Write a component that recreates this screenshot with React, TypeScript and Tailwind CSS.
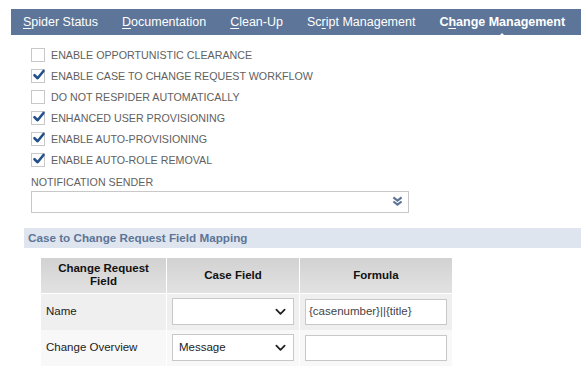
import React from "react";

const navItems: { pre: string; u: string; post: string; active?: boolean }[] = [
  { pre: "", u: "S", post: "pider Status" },
  { pre: "", u: "D", post: "ocumentation" },
  { pre: "", u: "C", post: "lean-Up" },
  { pre: "Sc", u: "r", post: "ipt Management" },
  { pre: "C", u: "h", post: "ange Management", active: true },
];

const checks: { label: string; checked: boolean }[] = [
  { label: "ENABLE OPPORTUNISTIC CLEARANCE", checked: false },
  { label: "ENABLE CASE TO CHANGE REQUEST WORKFLOW", checked: true },
  { label: "DO NOT RESPIDER AUTOMATICALLY", checked: false },
  { label: "ENHANCED USER PROVISIONING", checked: true },
  { label: "ENABLE AUTO-PROVISIONING", checked: true },
  { label: "ENABLE AUTO-ROLE REMOVAL", checked: true },
];

function Check({ checked }: { checked: boolean }) {
  return (
    <div className="relative w-[14px] h-[14px] border border-[#c8c8c8] bg-white shrink-0">
      {checked && (
        <svg viewBox="0 0 14 14" className="absolute left-[0px] top-[-2px] w-[14px] h-[14px]">
          <path d="M2.5 7.2 L5.6 10.2 L11.5 3" fill="none" stroke="#23508a" strokeWidth="2.6" strokeLinecap="round" strokeLinejoin="round" />
        </svg>
      )}
    </div>
  );
}

function Chevron() {
  return (
    <svg viewBox="0 0 12 8" className="w-[11px] h-[8px]">
      <path d="M1.5 1.5 L6 6 L10.5 1.5" fill="none" stroke="#222" strokeWidth="2" strokeLinecap="round" strokeLinejoin="round" />
    </svg>
  );
}

export default function App() {
  return (
    <div className="w-[581px] h-[370px] bg-white overflow-hidden relative" style={{ fontFamily: '"Liberation Sans", Arial, sans-serif' }}>
      <div className="ml-[11px] mt-[9px] h-[26px] bg-[#5d7598] flex items-center pl-[12px] gap-[24px] text-white text-[12.5px] relative">
        {navItems.map((n, i) => (
          <div key={i} className={`relative whitespace-nowrap pt-[1px] ${n.active ? "font-bold" : ""}`}>
            {n.pre}
            <span className="underline underline-offset-[2px]">{n.u}</span>
            {n.post}
            {n.active && (
              <div className="absolute left-1/2 -translate-x-1/2 bottom-[-6px] w-0 h-0 border-l-[5px] border-r-[5px] border-b-[5px] border-l-transparent border-r-transparent border-b-white" />
            )}
          </div>
        ))}
      </div>

      <div className="pl-[31px] pt-[9px]">
        {checks.map((c, i) => (
          <div key={i} className="h-[21px] flex items-center gap-[6px]">
            <Check checked={c.checked} />
            <span className="text-[10.7px] text-[#616161] leading-none pt-[2px]">{c.label}</span>
          </div>
        ))}
        <div className="text-[10.7px] text-[#616161] mt-[7px] leading-none">NOTIFICATION SENDER</div>
        <div className="mt-[3px] w-[378px] h-[22px] border border-[#c8c8c8] bg-white flex items-center justify-end pr-[5px]">
          <svg viewBox="0 0 12 12" className="w-[11px] h-[11px]">
            <path d="M1.5 1.5 L6 5 L10.5 1.5" fill="none" stroke="#5d7598" strokeWidth="2.4" strokeLinejoin="miter" />
            <path d="M1.5 6 L6 9.5 L10.5 6" fill="none" stroke="#5d7598" strokeWidth="2.4" strokeLinejoin="miter" />
          </svg>
        </div>
      </div>

      <div className="ml-[24px] mt-[15px] h-[20px] bg-[#dfe5ee] flex items-center pl-[4px] text-[11.7px] font-bold text-[#5d7598]">
        Case to Change Request Field Mapping
      </div>

      <div className="ml-[41px] mt-[10px] w-[410px] text-[11.5px]">
        <div className="grid grid-cols-[125px_132px_152px] gap-x-[1px] h-[35px] bg-white">
          <div className="bg-gradient-to-b from-[#d2d2d2] to-[#e2e2e2] flex items-center justify-center text-center font-bold text-[#111] leading-[13px]">
            Change Request<br />Field
          </div>
          <div className="bg-gradient-to-b from-[#d2d2d2] to-[#e2e2e2] flex items-center justify-center font-bold text-[#111]">Case Field</div>
          <div className="bg-gradient-to-b from-[#d2d2d2] to-[#e2e2e2] flex items-center justify-center font-bold text-[#111]">Formula</div>
        </div>
        <div className="grid grid-cols-[125px_132px_152px] gap-x-[1px] h-[36px] mt-[1px] bg-white">
          <div className="bg-[#efefef] flex items-center pl-[5px] text-[#222]">Name</div>
          <div className="bg-[#efefef] flex items-center px-[5px]">
            <div className="w-[122px] h-[27px] bg-white border border-[#c8c8c8] flex items-center justify-end pr-[7px]">
              <Chevron />
            </div>
          </div>
          <div className="bg-[#efefef] flex items-center pl-[5px]">
            <div className="w-[142px] h-[26px] bg-white border border-[#c8c8c8] flex items-center pl-[3px] text-[#444]">
              {"{casenumber}||{title}"}
            </div>
          </div>
        </div>
        <div className="grid grid-cols-[125px_132px_152px] gap-x-[1px] h-[36px] bg-white">
          <div className="bg-[#f8f8f8] flex items-center pl-[5px] text-[#222]">Change Overview</div>
          <div className="bg-[#f8f8f8] flex items-center px-[5px]">
            <div className="w-[122px] h-[27px] bg-white border border-[#c8c8c8] flex items-center justify-between pl-[6px] pr-[7px] text-[#222]">
              <span>Message</span>
              <Chevron />
            </div>
          </div>
          <div className="bg-[#f8f8f8] flex items-center pl-[5px]">
            <div className="w-[142px] h-[26px] bg-white border border-[#c8c8c8]" />
          </div>
        </div>
      </div>
    </div>
  );
}
